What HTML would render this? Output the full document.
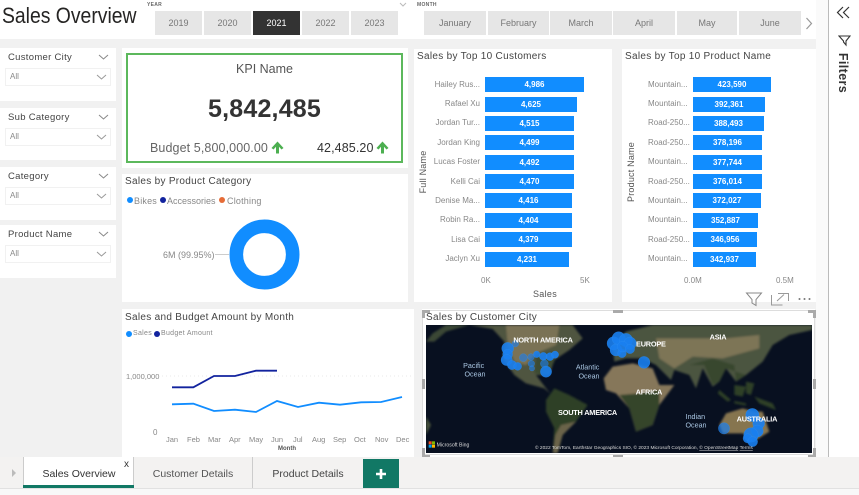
<!DOCTYPE html>
<html><head><meta charset="utf-8"><style>
html,body{margin:0;padding:0}
body{width:859px;height:495px;overflow:hidden;background:#f1f1f1;position:relative;font-family:"Liberation Sans",sans-serif;color:#444}
div,span{position:absolute;white-space:nowrap}
.w{background:#fff}
.b{background:#e6e6e6;height:24px;top:11px;text-align:center;line-height:24px;font-size:9px;color:#777}
.st{font-size:9.500px;color:#444;left:8px;letter-spacing:.3px}
.sb{left:5px;width:104px;height:16px;background:#fff;border:1px solid #f1f1f1;font-size:8px;color:#888;line-height:16px;text-indent:4px}
.t{font-size:10px;color:#444;letter-spacing:.3px;font-weight:400}
.bar{background:#118dff;height:15px;color:#fff;font-size:8px;font-weight:bold;text-align:center;line-height:16px}
.l{font-size:8px;color:#888;text-align:right;line-height:10px}
.lp{font-size:8px;color:#888;line-height:10px;left:648px}
.ax{font-size:8px;color:#888}
.dot{width:6px;height:6px;border-radius:50%}
</style></head><body>
<div class="w" style="left:0;top:0;width:816px;height:39px"></div>
<div class="w" style="left:828px;top:0;width:31px;height:457px;border-left:1px solid #bbb;box-sizing:border-box"></div>
<div style="left:816px;top:0;width:12px;height:457px;background:#fafafa"></div>
<div style="left:2px;top:2px;font-size:22px;color:#252423;line-height:28px;transform:scaleX(.88);transform-origin:0 0">Sales Overview</div>
<div style="left:147px;top:2px;font-size:5px;font-weight:bold;color:#666;letter-spacing:.3px">YEAR</div>
<div style="left:417px;top:2px;font-size:5px;font-weight:bold;color:#666;letter-spacing:.3px">MONTH</div>
<svg style="position:absolute;left:399px;top:2px" width="8" height="5"><path d="M1 1l3 3 3-3" fill="none" stroke="#bbb"/></svg>
<div class="b" style="left:155px;width:47px">2019</div>
<div class="b" style="left:204px;width:47px">2020</div>
<div class="b" style="left:253px;width:47px;background:#333;color:#fff">2021</div>
<div class="b" style="left:302px;width:47px">2022</div>
<div class="b" style="left:351px;width:47px">2023</div>
<div class="b" style="left:424px;width:62px">January</div>
<div class="b" style="left:488px;width:61px">February</div>
<div class="b" style="left:550px;width:62px">March</div>
<div class="b" style="left:613px;width:62px">April</div>
<div class="b" style="left:677px;width:60px">May</div>
<div class="b" style="left:739px;width:62px">June</div>
<svg style="position:absolute;left:805px;top:17px" width="8" height="13"><path d="M1.500 1l5 5.500-5 5.500" fill="none" stroke="#999" stroke-width="1.200"/></svg>
<svg style="position:absolute;left:836px;top:6px" width="16" height="13"><path d="M7 1L1.500 6.500 7 12M13 1L7.500 6.500 13 12" fill="none" stroke="#333" stroke-width="1.200"/></svg>
<svg style="position:absolute;left:838px;top:34px" width="13" height="13"><path d="M1 2h11L8 7v4L5.500 8V7z" fill="none" stroke="#333" stroke-width="1.100"/></svg>
<div style="left:813px;top:62.500px;width:60px;height:20px;line-height:20px;text-align:center;transform:rotate(90deg);font-size:12.500px;font-weight:bold;color:#333;letter-spacing:.4px">Filters</div>

<div class="w" style="left:0;top:48px;width:116px;height:53px"><div class="st" style="top:4px">Customer City</div><svg style="position:absolute;left:98px;top:6px" width="11" height="6"><path d="M1 1l4.500 4L10 1" fill="none" stroke="#888"/></svg><div class="sb" style="top:20px">All</div><svg style="position:absolute;left:96px;top:26px" width="11" height="6"><path d="M1 1l4.500 4L10 1" fill="none" stroke="#999"/></svg></div>
<div class="w" style="left:0;top:108px;width:116px;height:52px"><div class="st" style="top:4px">Sub Category</div><svg style="position:absolute;left:98px;top:6px" width="11" height="6"><path d="M1 1l4.500 4L10 1" fill="none" stroke="#888"/></svg><div class="sb" style="top:20px">All</div><svg style="position:absolute;left:96px;top:26px" width="11" height="6"><path d="M1 1l4.500 4L10 1" fill="none" stroke="#999"/></svg></div>
<div class="w" style="left:0;top:167px;width:116px;height:53px"><div class="st" style="top:4px">Category</div><svg style="position:absolute;left:98px;top:6px" width="11" height="6"><path d="M1 1l4.500 4L10 1" fill="none" stroke="#888"/></svg><div class="sb" style="top:20px">All</div><svg style="position:absolute;left:96px;top:26px" width="11" height="6"><path d="M1 1l4.500 4L10 1" fill="none" stroke="#999"/></svg></div>
<div class="w" style="left:0;top:225px;width:116px;height:53px"><div class="st" style="top:4px">Product Name</div><svg style="position:absolute;left:98px;top:6px" width="11" height="6"><path d="M1 1l4.500 4L10 1" fill="none" stroke="#888"/></svg><div class="sb" style="top:20px">All</div><svg style="position:absolute;left:96px;top:26px" width="11" height="6"><path d="M1 1l4.500 4L10 1" fill="none" stroke="#999"/></svg></div>

<div class="w" style="left:122px;top:48px;width:286px;height:120px"></div>
<div style="left:126px;top:53px;width:273px;height:106px;border:2.500px solid #5cb85c"></div>
<div style="left:125px;top:62px;width:279px;text-align:center;font-size:12.500px;color:#555;line-height:14px">KPI Name</div>
<div style="left:125px;top:95px;width:279px;text-align:center;font-size:25px;font-weight:bold;color:#333;line-height:29px;letter-spacing:.2px">5,842,485</div>
<div style="left:150px;top:141px;font-size:12.500px;color:#666;line-height:15px;letter-spacing:.1px">Budget 5,800,000.00</div>
<div style="left:317px;top:141px;font-size:12.500px;color:#333;line-height:15px;letter-spacing:.1px">42,485.20</div>
<svg style="position:absolute;left:271px;top:141px" width="13" height="13"><path d="M6.500 .5L12.500 7 10.500 8.500 8 5.800V12.500H5V5.800L2.500 8.500 .5 7z" fill="#4caf50"/></svg>
<svg style="position:absolute;left:376px;top:141px" width="13" height="13"><path d="M6.500 .5L12.500 7 10.500 8.500 8 5.800V12.500H5V5.800L2.500 8.500 .5 7z" fill="#4caf50"/></svg>

<div class="w" style="left:122px;top:174px;width:286px;height:128px"></div>
<div class="t" style="left:125px;top:176px">Sales by Product Category</div>
<div class="dot" style="left:127px;top:197px;background:#118dff"></div><div class="ax" style="left:134px;top:196px;font-size:9px;letter-spacing:.2px">Bikes</div>
<div class="dot" style="left:160px;top:197px;background:#12239e"></div><div class="ax" style="left:167px;top:196px;font-size:9px">Accessories</div>
<div class="dot" style="left:219px;top:197px;background:#e66c37"></div><div class="ax" style="left:227px;top:196px;font-size:9px;letter-spacing:.2px">Clothing</div>
<svg style="position:absolute;left:225px;top:215px" width="80" height="80"><circle cx="39.500" cy="39.500" r="28.200" fill="none" stroke="#118dff" stroke-width="13.600"/></svg>
<div style="left:215px;top:254px;width:14px;height:1px;background:#ccc"></div>
<div class="ax" style="left:163px;top:250px;font-size:9px">6M (99.95%)</div>

<div class="w" style="left:414px;top:49px;width:198px;height:253px"></div>
<div class="t" style="left:417px;top:51px">Sales by Top 10 Customers</div>
<div class="l" style="left:425px;top:80px;width:55px">Hailey Rus...</div>
<div class="l" style="left:425px;top:99px;width:55px">Rafael Xu</div>
<div class="l" style="left:425px;top:118px;width:55px">Jordan Tur...</div>
<div class="l" style="left:425px;top:138px;width:55px">Jordan King</div>
<div class="l" style="left:425px;top:157px;width:55px">Lucas Foster</div>
<div class="l" style="left:425px;top:177px;width:55px">Kelli Cai</div>
<div class="l" style="left:425px;top:196px;width:55px">Denise Ma...</div>
<div class="l" style="left:425px;top:215px;width:55px">Robin Ra...</div>
<div class="l" style="left:425px;top:235px;width:55px">Lisa Cai</div>
<div class="l" style="left:425px;top:254px;width:55px">Jaclyn Xu</div>
<div class="bar" style="left:485px;top:77px;width:99px">4,986</div>
<div class="bar" style="left:485px;top:97px;width:92px">4,625</div>
<div class="bar" style="left:485px;top:116px;width:89px">4,515</div>
<div class="bar" style="left:485px;top:135px;width:89px">4,499</div>
<div class="bar" style="left:485px;top:155px;width:89px">4,492</div>
<div class="bar" style="left:485px;top:174px;width:89px">4,470</div>
<div class="bar" style="left:485px;top:193px;width:87px">4,416</div>
<div class="bar" style="left:485px;top:213px;width:87px">4,404</div>
<div class="bar" style="left:485px;top:232px;width:87px">4,379</div>
<div class="bar" style="left:485px;top:252px;width:84px">4,231</div>
<div class="ax" style="left:481px;top:276px">0K</div><div class="ax" style="left:580px;top:276px">5K</div>
<div class="ax" style="left:533px;top:289px;font-size:9px;color:#555;letter-spacing:.3px">Sales</div>
<div class="ax" style="left:393px;top:167px;width:60px;text-align:center;transform:rotate(-90deg);font-size:9px;color:#555;letter-spacing:.2px">Full Name</div>

<div class="w" style="left:622px;top:49px;width:194px;height:253px"></div>
<div class="t" style="left:625px;top:51px">Sales by Top 10 Product Name</div>
<div class="lp" style="top:80px">Mountain...</div>
<div class="lp" style="top:99px">Mountain...</div>
<div class="lp" style="top:118px">Road-250...</div>
<div class="lp" style="top:138px">Road-250...</div>
<div class="lp" style="top:157px">Mountain...</div>
<div class="lp" style="top:177px">Road-250...</div>
<div class="lp" style="top:196px">Mountain...</div>
<div class="lp" style="top:215px">Mountain...</div>
<div class="lp" style="top:235px">Road-250...</div>
<div class="lp" style="top:254px">Mountain...</div>
<div class="bar" style="left:693px;top:77px;width:78px">423,590</div>
<div class="bar" style="left:693px;top:97px;width:72px">392,361</div>
<div class="bar" style="left:693px;top:116px;width:71px">388,493</div>
<div class="bar" style="left:693px;top:135px;width:69px">378,196</div>
<div class="bar" style="left:693px;top:155px;width:69px">377,744</div>
<div class="bar" style="left:693px;top:174px;width:69px">376,014</div>
<div class="bar" style="left:693px;top:193px;width:68px">372,027</div>
<div class="bar" style="left:693px;top:213px;width:65px">352,887</div>
<div class="bar" style="left:693px;top:232px;width:64px">346,956</div>
<div class="bar" style="left:693px;top:252px;width:63px">342,937</div>
<div class="ax" style="left:684px;top:276px">0.0M</div><div class="ax" style="left:776px;top:276px">0.5M</div>
<div class="ax" style="left:591px;top:167px;width:80px;text-align:center;transform:rotate(-90deg);font-size:9px;color:#555;letter-spacing:.2px">Product Name</div>

<svg style="position:absolute;left:745px;top:291px" width="70" height="16"><path d="M1.500 2h15L11 8.500v6L7 12V8.500z" fill="none" stroke="#888" stroke-width="1"/><path d="M26.500 4v10h11M33 2.500h10.500V10M32 10l7-6.500" fill="none" stroke="#999"/><circle cx="54.500" cy="8" r="1" fill="#777"/><circle cx="59.500" cy="8" r="1" fill="#777"/><circle cx="64.500" cy="8" r="1" fill="#777"/></svg>

<div class="w" style="left:122px;top:309px;width:292px;height:148px"></div>
<div class="t" style="left:125px;top:312px">Sales and Budget Amount by Month</div>
<div class="dot" style="left:126px;top:331px;background:#118dff"></div><div class="ax" style="left:133px;top:330px;font-size:7px;letter-spacing:.3px">Sales</div>
<div class="dot" style="left:154px;top:331px;background:#12239e"></div><div class="ax" style="left:161px;top:330px;font-size:7px;letter-spacing:.3px">Budget Amount</div>
<div class="ax" style="left:126px;top:372px;font-size:7.500px">1,000,000</div>
<div class="ax" style="left:153px;top:428px">0</div>
<svg style="position:absolute;left:0;top:0" width="859" height="495"><path d="M162 376H412" stroke="#e8e8e8" stroke-dasharray="1 3"/>
<polyline points="172,387.300 193.300,387.300 214,376 235,376 256,370.700 277,370.700" fill="none" stroke="#12239e" stroke-width="1.800"/>
<polyline points="172,404.300 193.300,403.700 214,411 235,409.700 256,412 277,401 298,407 319,402.700 340,404.700 361,402.300 381,402 402,397" fill="none" stroke="#118dff" stroke-width="1.800"/></svg>
<div class="ax" style="left:166px;top:435px;font-size:7.500px">Jan</div><div class="ax" style="left:187px;top:435px;font-size:7.500px">Feb</div><div class="ax" style="left:208px;top:435px;font-size:7.500px">Mar</div><div class="ax" style="left:229px;top:435px;font-size:7.500px">Apr</div><div class="ax" style="left:249px;top:435px;font-size:7.500px">May</div><div class="ax" style="left:271px;top:435px;font-size:7.500px">Jun</div><div class="ax" style="left:293px;top:435px;font-size:7.500px">Jul</div><div class="ax" style="left:312px;top:435px;font-size:7.500px">Aug</div><div class="ax" style="left:333px;top:435px;font-size:7.500px">Sep</div><div class="ax" style="left:354px;top:435px;font-size:7.500px">Oct</div><div class="ax" style="left:375px;top:435px;font-size:7.500px">Nov</div><div class="ax" style="left:396px;top:435px;font-size:7.500px">Dec</div>
<div class="ax" style="left:278px;top:446px;font-size:6px;color:#555;font-weight:bold">Month</div>

<div class="w" style="left:422px;top:309px;width:393px;height:148px"></div>
<div style="left:422px;top:310px;width:393px;height:145px;border:1px solid #ddd;box-sizing:border-box"></div>
<div class="t" style="left:426px;top:312px;color:#444">Sales by Customer City</div>
<svg style="position:absolute;left:426px;top:325px" width="386" height="128" viewBox="0 0 1158 384">
<defs><filter id="f" x="-5%" y="-5%" width="110%" height="110%"><feGaussianBlur stdDeviation="3"/></filter></defs>
<rect width="1158" height="384" fill="#081020"/>
<g filter="url(#f)">
<path d="M130 0L200 12 235 50 230 100 265 150 300 175 355 190 372 205 345 170 330 150 370 150 385 105 430 75 470 40 440 0z" fill="#4f5540"/>
<path d="M240 0H400L390 60 330 85 300 120 265 110 245 60z" fill="#7a7254"/>
<path d="M330 90L385 80 385 110 360 150 325 145z" fill="#3d4b30"/>
<path d="M0 50L20 25 60 0H130L60 20 25 50z" fill="#3b4636"/>
<path d="M360 225L385 190 430 210 485 240 450 290 410 330 395 384H380L385 310 360 260z" fill="#2f4126"/>
<path d="M405 300L450 290 410 330 395 384H380L388 330z" fill="#6a6348"/>
<path d="M533 160L560 125 620 115 680 130 700 180 745 180 700 240 680 300 630 320 610 250 570 205 540 195z" fill="#86775a"/>
<path d="M640 205L700 195 700 240 680 300 630 320 610 250 580 210z" fill="#35452a"/>
<path d="M560 60L600 20 680 0H1158V15L1090 30 1040 60 1010 110 960 150 930 170 900 130 880 170 860 185 830 130 810 190 790 150 745 135 735 165 690 120 650 100 600 100 565 110z" fill="#4c5540"/>
<path d="M690 40H900L1000 30 1000 70 890 100 800 95 745 130 700 100z" fill="#7d7556"/>
<path d="M790 120L835 120 860 180 880 170 900 130 960 150 930 170 925 120 860 100z" fill="#38472d"/>
<path d="M880 195L915 225 905 230 875 205zM925 228L960 235 960 242 925 235zM925 180L960 185 950 215 925 210zM960 170L985 175 975 210 960 205zM985 215L1040 235 1050 255 1000 235z" fill="#2f4028"/>
<path d="M880 300L900 265 950 250 985 260 1010 260 1030 320 990 345 950 325 890 325z" fill="#86744f"/>
<path d="M0 275L15 300 0 330z" fill="#45503a"/>
</g>
<g fill="#1a7ff0" fill-opacity=".9" stroke="#3b98f5" stroke-opacity=".6">
<circle cx="245" cy="70" r="18"/><circle cx="245" cy="88" r="15"/><circle cx="268" cy="56" r="10" fill-opacity=".6"/><circle cx="242" cy="105" r="17"/><circle cx="258" cy="120" r="14"/><circle cx="275" cy="124" r="12"/><circle cx="292" cy="98" r="12" fill-opacity=".6"/><circle cx="315" cy="96" r="10" fill-opacity=".6"/><circle cx="316" cy="116" r="10" fill-opacity=".6"/><circle cx="318" cy="130" r="8" fill-opacity=".6"/><circle cx="332" cy="88" r="10"/><circle cx="352" cy="94" r="12"/><circle cx="372" cy="95" r="12"/><circle cx="387" cy="89" r="11"/><circle cx="355" cy="116" r="12" fill-opacity=".6"/><circle cx="360" cy="140" r="17"/>
<circle cx="563" cy="55" r="20"/><circle cx="578" cy="40" r="20"/><circle cx="570" cy="75" r="18"/><circle cx="588" cy="85" r="13"/><circle cx="600" cy="45" r="20"/><circle cx="612" cy="55" r="19"/><circle cx="590" cy="65" r="16"/><circle cx="612" cy="72" r="14"/><circle cx="654" cy="112" r="18"/>
<circle cx="894" cy="310" r="17" fill-opacity=".7"/><circle cx="979" cy="270" r="20"/><circle cx="998" cy="295" r="18"/><circle cx="994" cy="318" r="18"/><circle cx="975" cy="330" r="22"/><circle cx="965" cy="340" r="14"/><circle cx="980" cy="350" r="15"/>
</g>
<g font-family="Liberation Sans" font-weight="bold" fill="#fff" font-size="22" letter-spacing="-.6">
<text x="262" y="53">NORTH AMERICA</text><text x="396" y="270">SOUTH AMERICA</text><text x="630" y="64">EUROPE</text><text x="851" y="44">ASIA</text><text x="629" y="209">AFRICA</text><text x="932" y="289">AUSTRALIA</text>
</g>
<g font-family="Liberation Sans" fill="#a9c6e2" font-size="21.500" text-anchor="middle">
<text x="143" y="129">Pacific</text><text x="147" y="155">Ocean</text><text x="485" y="134">Atlantic</text><text x="489" y="160">Ocean</text><text x="808" y="282">Indian</text><text x="810" y="307">Ocean</text>
</g>
<rect x="8" y="349" width="9" height="9" fill="#f25022"/><rect x="18" y="349" width="9" height="9" fill="#7fba00"/><rect x="8" y="359" width="9" height="9" fill="#00a4ef"/><rect x="18" y="359" width="9" height="9" fill="#ffb900"/>
<text x="32" y="364" font-family="Liberation Sans" fill="#ddd" font-size="15.500">Microsoft Bing</text>
<text x="327" y="372" font-family="Liberation Sans" fill="#ddd" font-size="14.500">© 2022 TomTom, Earthstar Geographics SIO, © 2023 Microsoft Corporation, <tspan text-decoration="underline">© OpenStreetMap</tspan>  <tspan text-decoration="underline">Terms</tspan></text>
</svg>
<svg style="position:absolute;left:420px;top:308px" width="398" height="152"><g fill="#aaa"><rect x="2" y="2" width="8" height="3"/><rect x="2" y="2" width="3" height="8"/><rect x="388" y="2" width="8" height="3"/><rect x="393" y="2" width="3" height="8"/><rect x="2" y="147" width="8" height="3"/><rect x="2" y="140" width="3" height="10"/><rect x="388" y="147" width="8" height="3"/><rect x="393" y="140" width="3" height="10"/><rect x="193" y="2" width="10" height="3"/><rect x="193" y="147" width="10" height="3"/><rect x="2" y="71" width="3" height="10"/><rect x="393" y="71" width="3" height="10"/></g></svg>

<div style="left:0;top:457px;width:859px;height:31px;background:#f3f2f1;border-bottom:1px solid #e1e1e1;box-sizing:content-box"></div>
<div style="left:0;top:489px;width:859px;height:6px;background:#f8f8f8"></div>
<svg style="position:absolute;left:11px;top:468px" width="7" height="10"><path d="M1 1l4 4-4 4z" fill="#bbb"/></svg>
<div style="left:23px;top:457px;width:111px;height:28px;background:#fff;border-left:1px solid #ccc;border-right:1px solid #ccc;box-sizing:border-box"></div>
<div style="left:23px;top:485px;width:111px;height:3px;background:#117865"></div>
<div style="left:24px;top:467px;width:110px;text-align:center;font-size:10.500px;color:#333;line-height:14px">Sales Overview</div>
<div style="left:124px;top:459px;font-size:10px;color:#333;line-height:12px">x</div>
<div style="left:134px;top:467px;width:118px;text-align:center;font-size:10.500px;color:#555;line-height:14px">Customer Details</div>
<div style="left:252px;top:457px;width:1px;height:31px;background:#ccc"></div>
<div style="left:253px;top:467px;width:110px;text-align:center;font-size:10.500px;color:#444;line-height:14px">Product Details</div>
<div style="left:363px;top:459px;width:36px;height:29px;background:#117865"></div>
<svg style="position:absolute;left:375px;top:468px" width="12" height="12"><path d="M6 1v10M1 6h10" stroke="#fff" stroke-width="2.600"/></svg>
</body></html>
